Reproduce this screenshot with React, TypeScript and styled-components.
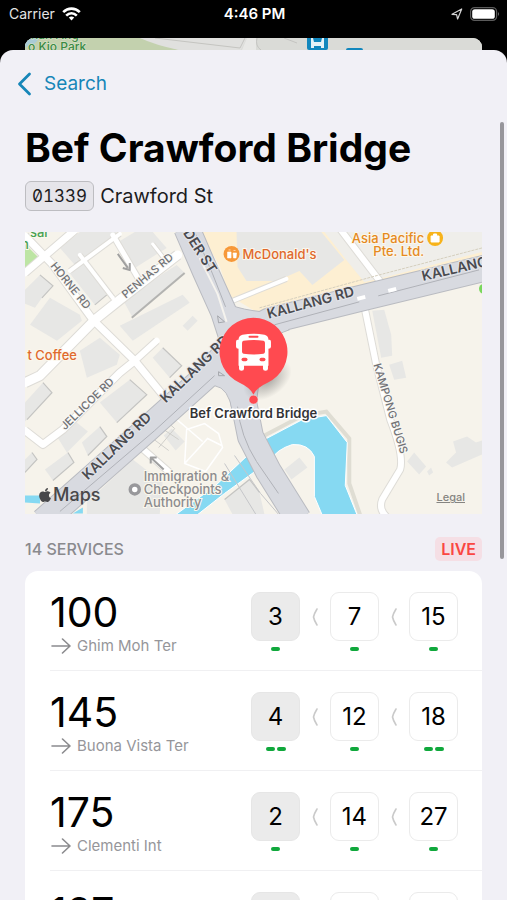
import React from "react";
import styled, { createGlobalStyle } from "styled-components";
import { FaApple } from "react-icons/fa";

const GlobalStyle = createGlobalStyle`
  * { box-sizing: border-box; }
  html, body { margin: 0; background: #000; }
  body { font-family: Inter, "Liberation Sans", sans-serif; color: #000; }
`;

const Screen = styled.div`
  display: flex;
  flex-direction: column;
  height: 100vh;
  overflow: hidden;
  background: #000;
`;

const StatusBar = styled.header`
  flex: none;
  display: grid;
  grid-template-columns: 1fr auto 1fr;
  align-items: center;
  height: 38px;
  padding: 0 7px 10px 9px;
  color: #fff;
  font-size: 14px;
  line-height: 20px;
`;

const StatusSide = styled.div<{ $end?: boolean }>`
  display: flex;
  align-items: center;
  justify-content: ${(p) => (p.$end ? "flex-end" : "flex-start")};
  gap: 7px;
  color: #e4e4e4;
`;

const Clock = styled.time`
  font-weight: 600;
  font-size: 15px;
`;

const BackdropCard = styled.div`
  flex: none;
  height: 12px;
  margin: 0 25px;
  border-radius: 9px 9px 0 0;
  overflow: hidden;
  background: #dadad7;

  svg { display: block; width: 100%; height: 100%; }
`;

const Sheet = styled.main`
  position: relative;
  flex: 1;
  min-height: 0;
  overflow: hidden;
  padding: 18px 25px 0;
  border-radius: 13px 13px 0 0;
  background: #f1f0f6;
`;

const ScrollThumb = styled.span`
  position: absolute;
  top: 72px;
  right: 3px;
  width: 4px;
  height: 437px;
  border-radius: 2px;
  background: #97969b;
`;

const BackButton = styled.button`
  display: flex;
  align-items: center;
  gap: 12px;
  height: 32px;
  margin: 0 0 0 -8px;
  padding: 0;
  border: 0;
  background: none;
  color: #1686b8;
  font: 400 19px/32px Inter, sans-serif;
  cursor: pointer;
`;

const Title = styled.h1`
  margin: 24px 0 0;
  font-size: 39px;
  line-height: 48px;
  font-weight: 700;
  white-space: nowrap;
`;

const StopLine = styled.div`
  display: flex;
  align-items: center;
  gap: 6px;
  margin-top: 9px;
  font-size: 20px;
  line-height: 28px;
  color: #1c1c1e;
`;

const StopCode = styled.span`
  padding: 0 6px;
  border: 1px solid #bdbdc1;
  border-radius: 6px;
  background: #e6e5ea;
  font-size: 17px;
  font-feature-settings: "tnum", "zero";
`;

const MapFrame = styled.section`
  position: relative;
  margin-top: 21px;

  > svg { display: block; width: 100%; height: auto; }
`;

const AppleMaps = styled.div`
  position: absolute;
  left: 12px;
  bottom: 8px;
  display: flex;
  align-items: center;
  color: #48484a;
  font-size: 18px;
  line-height: 22px;
  font-weight: 500;
`;

const LegalLink = styled.a`
  position: absolute;
  right: 17px;
  bottom: 9px;
  color: #858481;
  font-size: 11px;
  line-height: 16px;
  font-weight: 500;
`;

const SectionHead = styled.div`
  display: flex;
  align-items: center;
  justify-content: space-between;
  margin: 23px 0 10px;
`;

const SectionTitle = styled.h2`
  margin: 0;
  color: #8a8a8e;
  font-size: 16px;
  line-height: 24px;
  font-weight: 500;
`;

const LiveBadge = styled.span`
  padding: 0 6px;
  border-radius: 5px;
  background: #f5dfe5;
  color: #fa4742;
  font-size: 16px;
  line-height: 24px;
  font-weight: 600;
`;

const ServiceList = styled.ul`
  margin: 0;
  padding: 0 0 0 25px;
  list-style: none;
  border-radius: 13px 13px 0 0;
  background: #fff;
`;

const ServiceRow = styled.li`
  display: flex;
  justify-content: space-between;
  height: 100px;
  padding-right: 24px;
  border-bottom: 1px solid #f0f0f2;
`;

const ServiceNumber = styled.div`
  margin-top: 17px;
  font-size: 41px;
  line-height: 48px;
`;

const Destination = styled.div`
  display: flex;
  align-items: center;
  gap: 6px;
  color: #96969a;
  font-size: 15px;
  line-height: 20px;
`;

const Arrivals = styled.div`
  display: flex;
  align-items: flex-start;
  padding-top: 21px;
`;

const Arrival = styled.div`
  display: flex;
  flex-direction: column;
  align-items: center;
  gap: 6px;
`;

const Minutes = styled.div<{ $next: boolean }>`
  display: flex;
  align-items: center;
  justify-content: center;
  width: 49px;
  height: 49px;
  border: 1px solid ${(p) => (p.$next ? "#e6e6e6" : "#ebebeb")};
  border-radius: 9px;
  background: ${(p) => (p.$next ? "#ebebeb" : "#fff")};
  font-size: 24px;
  line-height: 28px;
`;

const Loads = styled.div`
  display: flex;
  gap: 2px;
`;

const Load = styled.span`
  width: 9px;
  height: 4px;
  border-radius: 2px;
  background: #10a83c;
`;

const Separator = styled.div`
  display: flex;
  align-items: center;
  justify-content: center;
  width: 30px;
  height: 49px;
`;

const WifiIcon = () => (
  <svg width="19" height="14" viewBox="0 0 19 14" fill="none" stroke="#fff" strokeWidth="2.6" aria-hidden="true">
    <path d="M1.2 5.2C6 .4 13 .4 17.8 5.2" />
    <path d="M4.2 8.6C7.3 5.6 11.700 5.600 14.800 8.600" />
    <path d="M9.500 13.500L6.800 10.600Q9.500 8.400 12.200 10.600Z" fill="#fff" stroke="none" />
  </svg>
);

const LocationIcon = () => (
  <svg width="12" height="12" viewBox="0 0 12 12" fill="none" stroke="#d4d4d4" strokeWidth="1.2" strokeLinejoin="round" aria-hidden="true">
    <path d="M1 6.3L10.7 1L6.6 11L5.6 6.6Z" />
  </svg>
);

const BatteryIcon = () => (
  <svg width="30" height="14" viewBox="0 0 30 14" aria-hidden="true">
    <rect x=".6" y=".6" width="26" height="12.8" rx="4" fill="none" stroke="#5b5b5b" strokeWidth="1.2" />
    <rect x="2.2" y="2.2" width="22.6" height="9.6" rx="2.6" fill="#fff" />
    <path d="M28 5v4q2-2 0-4" fill="#6b6b6b" />
  </svg>
);

const ChevronIcon = () => (
  <svg width="15" height="24" viewBox="0 0 15 24" fill="none" stroke="currentColor" strokeWidth="2.8" strokeLinecap="round" strokeLinejoin="round" aria-hidden="true">
    <path d="M12.5 2L2.5 12L12.5 22" />
  </svg>
);

const ArrowIcon = () => (
  <svg width="21" height="16" viewBox="0 0 21 16" fill="none" stroke="#8b8b8e" strokeWidth="1.6" strokeLinecap="round" strokeLinejoin="round" aria-hidden="true">
    <path d="M2 8H20M12.5 1L20 8L12.5 15" />
  </svg>
);

const SeparatorIcon = () => (
  <svg width="6" height="18" viewBox="0 0 6 18" fill="none" stroke="#cacaca" strokeWidth="1.6" strokeLinecap="round" strokeLinejoin="round" aria-hidden="true">
    <path d="M5 1Q2 6 1.500 9Q2 12 5 17" />
  </svg>
);

const buildings = [
  "M35 16L55 0H92L85 9L53 31L50 33Z",
  "M43 39L62 29L82 63L70 73Z",
  "M95 9L110 0H128L142 16L110 36L92 14Z",
  "M98 68L152 33L160 41L108 86Z",
  "M95 94L158 63L165 71L108 109Z",
  "M158 94L168 84L173 89L163 99Z",
  "M0 58L15 43L28 54L17 66L10 76L0 72Z",
  "M5 93L25 66L55 83L57 89L32 109Z",
  "M55 119L75 106L95 123L92 133L62 146Z",
  "M128 126L138 116L157 134L145 146Z",
  "M0 171L18 151L27 161L0 190Z",
  "M75 171L105 148L122 163L92 191Z",
  "M32 205L48 188L63 200L42 221Z",
  "M57 211L75 195L82 205L63 224Z",
  "M20 238L43 221L49 231L28 249Z",
  "M0 228L7 221L12 228L0 241Z",
  "M62 271L108 228L138 251L135 283H62Z",
  "M200 268L225 248L235 261L240 283H208Z",
  "M139 204L147 197L160 210L151 219Z",
  "M212 0H297L320 28L288 53L275 39L252 49L222 49L213 35Z",
  "M348 79L360 78L367 103L368 124L357 126Z",
  "M365 133L378 129L382 146L370 148Z",
  "M260 238L275 226L283 236L267 248Z",
  "M383 230L390 221L402 235L395 243Z",
  "M403 240L407 236L409 241L405 244Z",
  "M422 231L432 221L429 210L443 205L452 211L458 209V223L428 236Z",
];

const shadows = [
  "M50 32L85 9",
  "M15 43L28 54L17 66",
  "M18 151L27 161L2 188",
  "M75 195L82 205L63 224",
  "M43 221L49 231L28 249",
  "M7 221L12 228L0 241",
  "M138 116L157 134L145 146",
  "M105 148L122 163L92 191",
  "M82 63L70 73",
  "M200 268L225 248L235 261",
];

const streets: [string, number][] = [
  ["M0 151L15 144L70 88L95 68L153 23", 9],
  ["M0 4L28 33L68 88L110 129L142 168", 7],
  ["M0 41L50 -2", 7],
  ["M45 39L95 2", 4],
  ["M55 23L88 66", 4],
  ["M88 3L115 49", 5],
  ["M128 12L142 30", 3],
  ["M110 129L132 109", 6],
  ["M0 199L18 213L38 198L95 141L110 129", 7],
  ["M208 69L262 47", 4],
  ["M315 -4L357 51", 6],
  ["M340 74L352 133L366 188Q380 224 376 238L358 268Q354 278 363 286", 6],
  ["M113 213L145 241", 6],
];

type RoadLabelProps = { x: number; y: number; angle: number; major?: boolean; children: string };

const RoadLabel = ({ x, y, angle, major, children }: RoadLabelProps) => (
  <text
    transform={`translate(${x} ${y}) rotate(${angle})`}
    fontSize={major ? 14 : 11}
    fontWeight={major ? 600 : 500}
    fill={major ? "#4a4b50" : "#717276"}
    stroke={major ? "#e4e5ea" : "#f8f7f3"}
    strokeWidth="2"
    paintOrder="stroke"
  >
    {children}
  </text>
);

const PlaceLabel = styled.text<{ $end?: boolean }>`
  font-size: 13px;
  font-weight: 500;
  text-anchor: ${(p) => (p.$end ? "end" : "start")};
  stroke: #fbf7ec;
  stroke-width: 2px;
  paint-order: stroke;
`;

const StopMap = () => (
  <svg viewBox="0 0 458 283" fontFamily="Inter, sans-serif" role="img" aria-label="Map of Bef Crawford Bridge">
    <defs>
      <radialGradient id="pinShade">
        <stop offset="0" stopColor="#555" stopOpacity=".5" />
        <stop offset="1" stopColor="#555" stopOpacity="0" />
      </radialGradient>
    </defs>
    <rect width="458" height="283" fill="#f6f3eb" />
    <path d="M176 0H458V26L340 56L235 82L205 64L195 34Z" fill="#fdefd2" />
    <path d="M300 0H458V20L362 45L340 50L322 28Z" fill="#efeeea" />
    <path d="M0 12L13 25L0 37Z" fill="#bde5a4" />

    {buildings.map((d) => <path key={d} d={d} fill="#e7e7e5" />)}
    {shadows.map((d) => <path key={d} d={d} fill="none" stroke="#c4c4c2" strokeWidth="1.2" />)}
    <path d="M107 86L160 41" stroke="#b3b3b1" strokeWidth="2" />

    <path d="M240 204L278 184L302 180L325 207L325 252L336 284" fill="none" stroke="#dfddd3" strokeWidth="4" />
    <path d="M150 284L190 255L240 208L278 188L302 184L323 211L321 254L333 284H298L290 265V225Q284 212 268 213Q252 218 247 228L200 262L172 284Z" fill="#86d9f2" stroke="#fff" strokeWidth="1" />
    <path d="M0 264H15V272L0 271ZM48 282L58 276V282Z" fill="#86d9f2" />

    {streets.map(([d, w]) => <path key={d} d={d} fill="none" stroke="#dedcd7" strokeWidth={w + 2} strokeLinejoin="round" />)}
    {streets.map(([d, w]) => <path key={d} d={d} fill="none" stroke="#fff" strokeWidth={w} strokeLinejoin="round" strokeLinecap="round" />)}
    <path d="M162 198L180 192L194 202L198 216L181 240L160 232ZM160 232L183 207L197 214M150 186L178 210" fill="none" stroke="#fff" strokeWidth="1.5" />
    <path d="M122 213L140 188L150 197L134 216M128 207L144 219M136 196L154 208" fill="none" stroke="#d0cfcb" />

    <g fill="none" strokeLinejoin="round">
      <g stroke="#b9bbc1">
        <path d="M18 290L122 198L182 144L216 104L245 89L338 66L462 36" strokeWidth="27" />
        <path d="M162 -4L181 40L199 80L212 120L218 165L226 205L244 240L274 288" strokeWidth="27" />
      </g>
      <path d="M189 60Q198 76 238 80L265 98Q238 106 236 140L232 170L208 180Q204 156 190 154Q182 154 172 163L180 130Q205 115 194 75Z" fill="#d8dae0" stroke="#b9bbc1" />
      <g stroke="#d8dae0">
        <path d="M18 290L122 198L182 144L216 104L245 89L338 66L462 36" strokeWidth="25" />
        <path d="M162 -4L181 40L199 80L212 120L218 165L226 205L244 240L274 288" strokeWidth="25" />
      </g>
      <path d="M35 280L130 199L190 144M250 93L335 70M354 64L455 38M170 0L188 42L201 75M213 175Q216 205 232 230L254 262" stroke="#b0b2b8" />
      <path d="M175 26L193 62L202 90" stroke="#f5f3ee" strokeWidth="2" />
      <path d="M333 67L341 65M364 59L372 57" stroke="#fff" strokeWidth="4" />
      <path d="M210 224L236 262L255 284M200 232L232 284" stroke="#c5c6c9" />
      <path d="M235 76L355 43L458 16" stroke="#d5cfbe" strokeDasharray="3 1" />
      <path d="M193 84L200 90L194 91ZM194 140L200 144L194 144Z" stroke="#a5a7ac" />
      <path d="M93 22L103 36M98 36L105 38L105 31" stroke="#a0a0a0" strokeWidth="2" />
      <path d="M139 238L126 226M126 232V226H132" stroke="#a0a0a0" strokeWidth="2" />
    </g>
    <circle cx="460" cy="57" r="5" fill="#79d75c" />

    <RoadLabel x={25} y={34} angle={51}>HORNE RD</RoadLabel>
    <RoadLabel x={101} y={67} angle={-40}>PENHAS RD</RoadLabel>
    <RoadLabel x={40} y={199} angle={-44}>JELLICOE RD</RoadLabel>
    <RoadLabel x={349} y={133} angle={73}>KAMPONG BUGIS</RoadLabel>
    <RoadLabel x={158} y={1} angle={57} major>DER ST</RoadLabel>
    <RoadLabel x={244} y={87} angle={-15} major>KALLANG RD</RoadLabel>
    <RoadLabel x={399} y={49} angle={-13} major>KALLANG RD</RoadLabel>
    <RoadLabel x={63} y={249} angle={-44} major>KALLANG RD</RoadLabel>
    <RoadLabel x={141} y={172} angle={-44} major>KALLANG RD</RoadLabel>

    <PlaceLabel x="5" y="5" fill="#46a152">sal</PlaceLabel>
    <PlaceLabel x="-4" y="17" fill="#46a152">n</PlaceLabel>
    <PlaceLabel x="52" y="128" fill="#e0692c" $end>t Coffee</PlaceLabel>
    <PlaceLabel x="218" y="27" fill="#e0692c">McDonald&apos;s</PlaceLabel>
    <PlaceLabel x="400" y="11" fill="#e58a1f" $end>Asia Pacific</PlaceLabel>
    <PlaceLabel x="400" y="24" fill="#e58a1f" $end>Pte. Ltd.</PlaceLabel>
    <g fill="#8c8c8f">
      <PlaceLabel x="119" y="250">Immigration &amp;</PlaceLabel>
      <PlaceLabel x="119" y="263">Checkpoints</PlaceLabel>
      <PlaceLabel x="119" y="276">Authority</PlaceLabel>
    </g>
    <circle cx="207" cy="22" r="8" fill="#f79838" />
    <path d="M203 20h3.500v6h-3.500zM208.500 21h3.500l-.5 5h-2.500zM204 18h2M209 18.500h2" fill="#fff" stroke="#fff" strokeWidth=".6" />
    <circle cx="411" cy="6" r="8" fill="#f7b31a" />
    <path d="M407 4h8v6h-8zM409.500 4v-2h3v2" fill="#fff" stroke="#fff" />
    <circle cx="110" cy="258" r="4.500" fill="#fff" stroke="#98989b" strokeWidth="3.500" />

    <ellipse cx="243" cy="148" rx="27" ry="17" fill="url(#pinShade)" transform="rotate(-35 243 148)" />
    <path d="M229 86A34 34 0 0 1 243 151Q232 156 229 163Q226 156 215 151A34 34 0 0 1 229 86Z" fill="#ff4a50" />
    <circle cx="229" cy="168" r="4.500" fill="#ff4a50" stroke="#ecd9dc" strokeWidth=".5" />
    <g fill="#fff">
      <path d="M218 103Q229 101 240 103Q244 104 244 108H245Q246.500 108 246.500 110V115Q246.500 117 244 117V134H243.500V137Q243.500 139 241 139T238.500 137V134H219.500V137Q219.500 139 217 139T214.500 137V134H214V117Q211.500 117 211.500 115V110Q211.500 108 213 108H214Q214 104 218 103Z" />
      <g fill="#ff4a50">
        <rect x="224" y="104" width="10" height="2" rx="1" />
        <path d="M219 109Q229 107.500 239 109Q240.500 109.500 240.500 111V120Q240.500 121.500 239 122Q229 123.500 219 122Q217.500 121.500 217.500 120V111Q217.500 109.500 219 109Z" />
        <rect x="217" y="126" width="6" height="3.600" rx="1.800" />
        <rect x="235" y="126" width="6" height="3.600" rx="1.800" />
      </g>
    </g>
    <text x="229" y="186" textAnchor="middle" fontSize="13" fontWeight="600" fill="#333336" stroke="#fff" strokeWidth="3" strokeLinejoin="round" paintOrder="stroke">Bef Crawford Bridge</text>
  </svg>
);

const BackdropMap = () => (
  <svg viewBox="0 0 457 12" preserveAspectRatio="xMinYMin slice" fontFamily="Inter, sans-serif" aria-hidden="true">
    <rect width="457" height="12" fill="#dadbd7" />
    <path d="M0 0H115L154 12H0Z" fill="#c3d1ae" />
    <path d="M0 0H14Q10 8 0 9Z" fill="#a9cbd6" />
    <path d="M115 0H222L216 12H154Q130 7 115 0Z" fill="#e0e0de" />
    <path d="M130 0L215 10L220 0M232 0Q230 8 236 12M259 0L272 5" fill="none" stroke="#c4c4c1" />
    <path d="M222 0H231V12H217Z" fill="#e8e8e6" />
    <g fontSize="12" fontWeight="500" fill="#3b8a43" stroke="#dce5cf" strokeWidth="1" paintOrder="stroke">
      <text x="6" y="1">nan Ang</text>
      <text x="3" y="13">o Kio Park</text>
    </g>
    <rect x="282" y="-8" width="21" height="20" rx="2" fill="#1287bd" />
    <path d="M286 0H288L289 4H296L297 0H299V10H296V8H289V10H286Z" fill="#e5f2f7" />
    <rect x="321" y="10" width="17" height="6" rx="2" fill="#1287bd" />
  </svg>
);

const services = [
  { number: "100", to: "Ghim Moh Ter", arrivals: [[3, 1], [7, 1], [15, 1]] },
  { number: "145", to: "Buona Vista Ter", arrivals: [[4, 2], [12, 1], [18, 2]] },
  { number: "175", to: "Clementi Int", arrivals: [[2, 1], [14, 1], [27, 1]] },
  { number: "197", to: "", arrivals: [[0, 0], [0, 0], [0, 0]] },
];

export default function App() {
  return (
    <Screen>
      <GlobalStyle />
      <StatusBar>
        <StatusSide>Carrier <WifiIcon /></StatusSide>
        <Clock>4:46 PM</Clock>
        <StatusSide $end><LocationIcon /><BatteryIcon /></StatusSide>
      </StatusBar>
      <BackdropCard><BackdropMap /></BackdropCard>
      <Sheet>
        <BackButton type="button"><ChevronIcon />Search</BackButton>
        <Title>Bef Crawford Bridge</Title>
        <StopLine><StopCode>01339</StopCode>Crawford St</StopLine>
        <MapFrame>
          <StopMap />
          <AppleMaps><FaApple size={16} aria-hidden="true" />Maps</AppleMaps>
          <LegalLink href="#legal">Legal</LegalLink>
        </MapFrame>
        <SectionHead>
          <SectionTitle>14 SERVICES</SectionTitle>
          <LiveBadge>LIVE</LiveBadge>
        </SectionHead>
        <ServiceList>
          {services.map((service) => (
            <ServiceRow key={service.number}>
              <div>
                <ServiceNumber>{service.number}</ServiceNumber>
                {service.to && <Destination><ArrowIcon />{service.to}</Destination>}
              </div>
              <Arrivals>
                {service.arrivals.map(([minutes, cars], i) => (
                  <React.Fragment key={i}>
                    {i > 0 && <Separator><SeparatorIcon /></Separator>}
                    <Arrival>
                      <Minutes $next={i === 0}>{minutes || ""}</Minutes>
                      <Loads>{Array.from({ length: cars }, (_, n) => <Load key={n} />)}</Loads>
                    </Arrival>
                  </React.Fragment>
                ))}
              </Arrivals>
            </ServiceRow>
          ))}
        </ServiceList>
        <ScrollThumb aria-hidden="true" />
      </Sheet>
    </Screen>
  );
}
